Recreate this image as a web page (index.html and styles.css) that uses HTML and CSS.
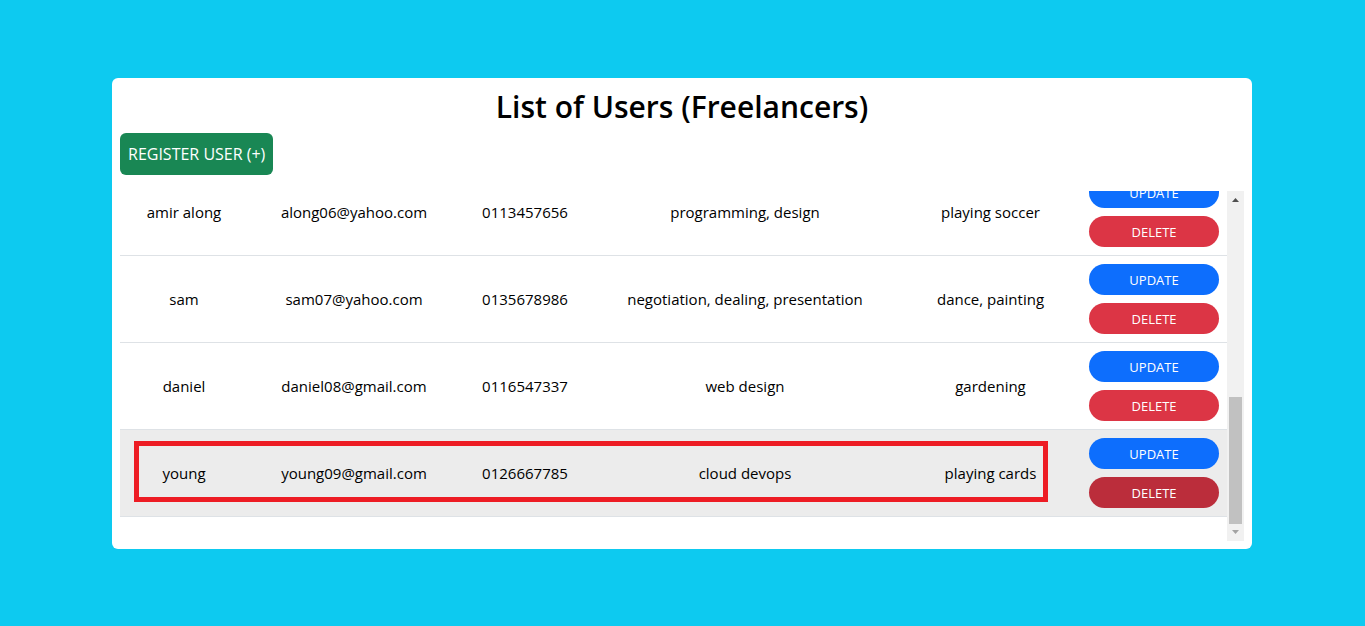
FILE: index.html
```html
<!DOCTYPE html>
<html lang="en">
<head>
<meta charset="utf-8">
<meta name="viewport" content="width=device-width, initial-scale=1">
<title>List of Users</title>
<link rel="stylesheet" href="styles.css">
</head>
<body>
<main class="card">
  <h2 class="title">List of Users (Freelancers)</h2>
  <button class="register" type="button">REGISTER USER (+)</button>
  <div class="pane">
    <div class="view">
      <table class="users">
        <colgroup><col class="c-name"><col class="c-mail"><col class="c-phone"><col class="c-skill"><col class="c-hobby"><col class="c-action"></colgroup>
        <tbody>
          <tr><td>amir along</td><td>along06@yahoo.com</td><td>0113457656</td><td>programming, design</td><td>playing soccer</td>
            <td><div class="actions"><button class="pill update" type="button">UPDATE</button><button class="pill delete" type="button">DELETE</button></div></td></tr>
          <tr><td>sam</td><td>sam07@yahoo.com</td><td>0135678986</td><td>negotiation, dealing, presentation</td><td>dance, painting</td>
            <td><div class="actions"><button class="pill update" type="button">UPDATE</button><button class="pill delete" type="button">DELETE</button></div></td></tr>
          <tr><td>daniel</td><td>daniel08@gmail.com</td><td>0116547337</td><td>web design</td><td>gardening</td>
            <td><div class="actions"><button class="pill update" type="button">UPDATE</button><button class="pill delete" type="button">DELETE</button></div></td></tr>
          <tr class="hovered"><td>young</td><td>young09@gmail.com</td><td>0126667785</td><td>cloud devops</td><td>playing cards</td>
            <td><div class="actions"><button class="pill update" type="button">UPDATE</button><button class="pill delete pressed" type="button">DELETE</button></div><span class="marker"></span></td></tr>
        </tbody>
      </table>
    </div>
    <div class="scrollbar" aria-hidden="true">
      <svg class="arrow" viewBox="0 0 17 17"><path d="M5 11h7L8.500 7z" fill="#505050"/></svg>
      <div class="track"><div class="thumb"></div></div>
      <svg class="arrow" viewBox="0 0 17 17"><path d="M5 6h7L8.500 10z" fill="#a3a3a3"/></svg>
    </div>
  </div>
</main>
</body>
</html>
```
FILE: styles.css
```css
* { box-sizing: border-box; }

body {
  margin: 0;
  min-height: 100vh;
  padding-right: 1px;
  display: flex;
  align-items: center;
  justify-content: center;
  background: #0dcaf0;
  color: #000;
  font-family: "Open Sans", "Noto Sans", sans-serif;
  font-size: 15px;
  line-height: 24px;
}

button {
  border: 0;
  color: #fff;
  font-family: inherit;
  cursor: pointer;
}

.card {
  width: 100%;
  max-width: 1140px;
  padding: 8px;
  border-radius: 6px;
  background: #fff;
}

.title {
  margin: 0 0 6px;
  font-size: 30px;
  font-weight: 600;
  line-height: 41px;
  text-align: center;
}

.register {
  display: block;
  margin-bottom: 16px;
  padding: 9px 8px;
  border-radius: 6px;
  background: #198754;
  font-size: 16px;
  line-height: 24px;
}

.pane {
  display: flex;
  height: 350px;
}

.view {
  flex: 1;
  min-width: 0;
  display: flex;
  flex-direction: column;
  justify-content: flex-end;
  padding-bottom: 24px;
  overflow: hidden;
}

.users {
  width: 100%;
  table-layout: fixed;
  border-collapse: separate;
  border-spacing: 0;
  text-align: center;
}

.c-name { width: 128px; }
.c-mail { width: 212px; }
.c-phone { width: 130px; }
.c-hobby { width: 181px; }
.c-action { width: 146px; }

.users td {
  padding: 8px;
  border-bottom: 1px solid #dee2e6;
  vertical-align: middle;
}

.hovered {
  position: relative;
  background: #ececec;
}

.marker {
  position: absolute;
  top: 11px;
  right: 179px;
  bottom: 15px;
  left: 14px;
  border: 5px solid #ed1c24;
  pointer-events: none;
}

.actions {
  display: grid;
  gap: 8px;
}

.pill {
  padding: 6px 8px 4px;
  border-radius: 16px;
  font-size: 13px;
  line-height: 21px;
}

.update { background: #0d6efd; }
.delete { background: #dc3545; }
.pressed { background: #bb2d3b; }

.scrollbar {
  width: 17px;
  display: flex;
  flex-direction: column;
  background: #f1f1f1;
}

.arrow {
  width: 17px;
  height: 17px;
}

.track {
  flex: 1;
  display: flex;
  flex-direction: column;
  justify-content: flex-end;
  padding: 0 2px;
}

.thumb {
  height: 40%;
  background: #c1c1c1;
}
```
